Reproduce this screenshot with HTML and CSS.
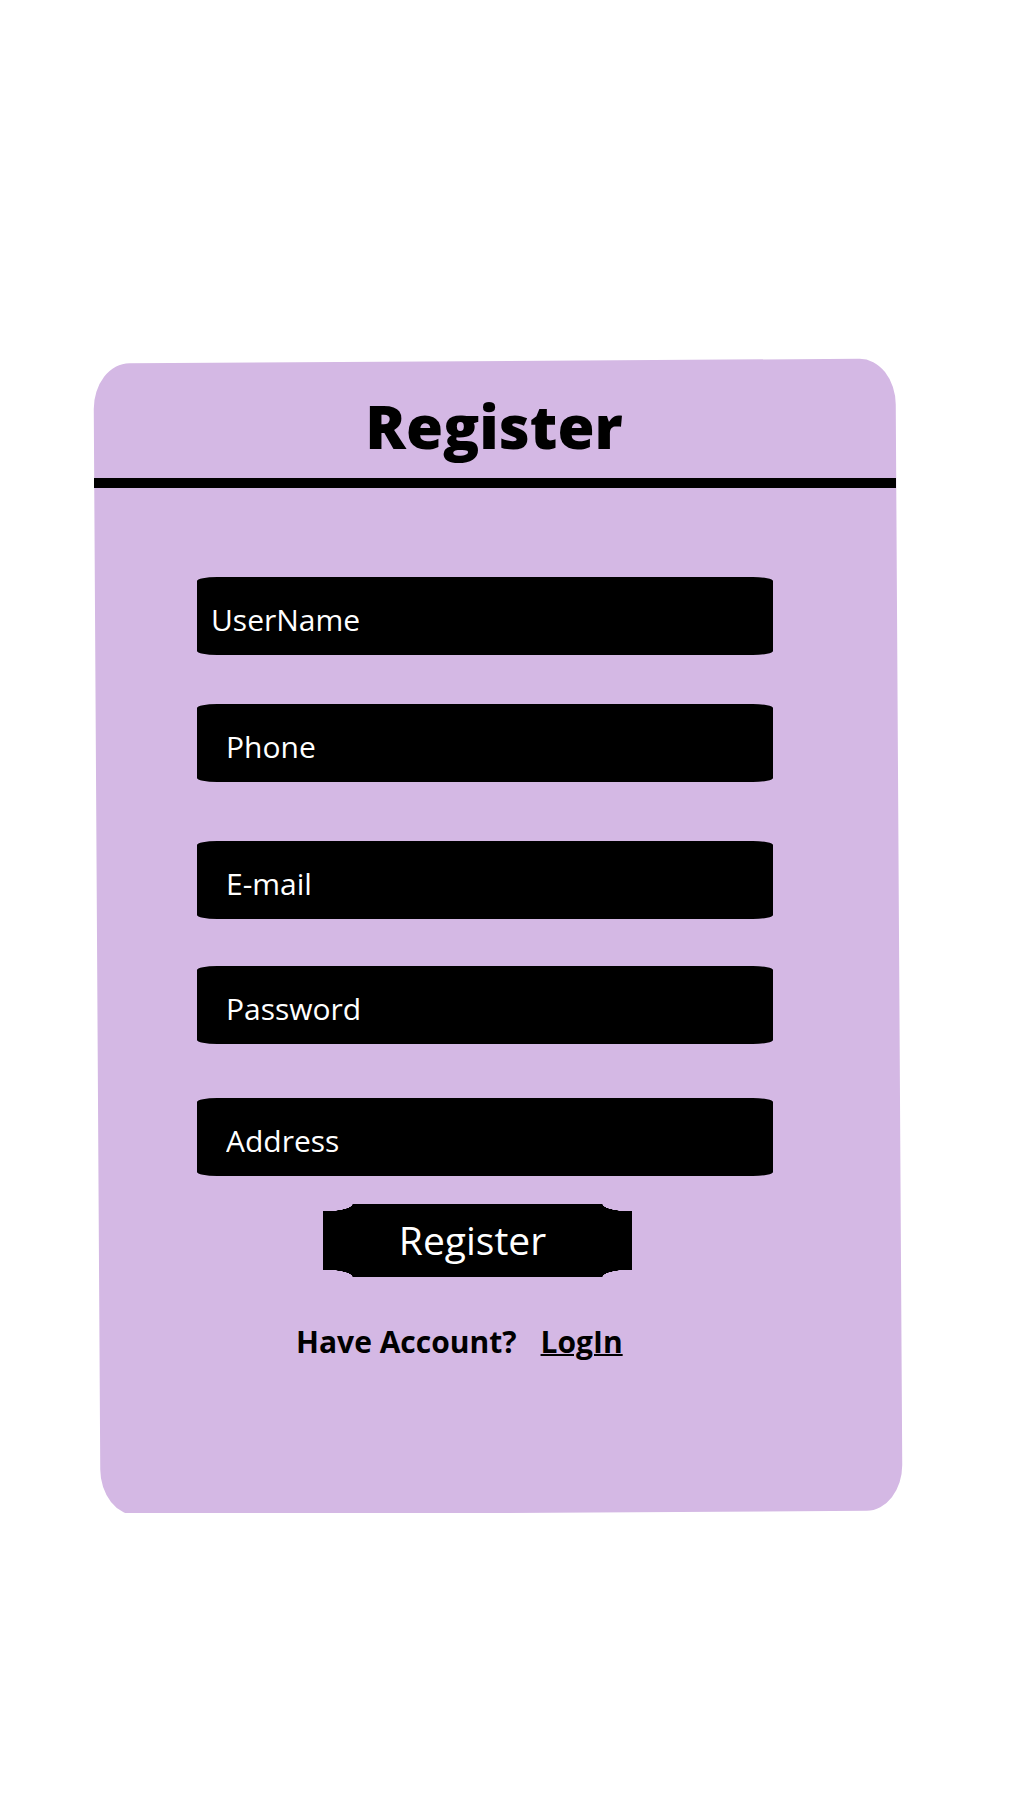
FILE: index.html
```html
<!DOCTYPE html>
<html lang="en">
<head>
<meta charset="utf-8">
<title>Register</title>
<link rel="stylesheet" href="styles.css">
</head>
<body>
<div class="card">
  <form class="card-inner">
    <h1 class="title">Register</h1>
    <div class="rule"></div>
    <div class="fields">
      <input class="field field-first" type="text" placeholder="UserName">
      <input class="field field-2" type="text" placeholder="Phone">
      <input class="field field-3" type="text" placeholder="E-mail">
      <input class="field field-4" type="password" placeholder="Password">
      <input class="field field-5" type="text" placeholder="Address">
    </div>
    <button class="btn" type="button">Register</button>
    <p class="have">Have Account?<a class="login" href="#">LogIn</a></p>
  </form>
</div>
</body>
</html>
```
FILE: styles.css
```css
html, body {
  margin: 0;
  padding: 0;
  background: #ffffff;
}
body {
  font-family: "Open Sans", "Noto Sans", sans-serif;
  padding-top: 361px;
  padding-left: 97px;
}
.card {
  width: 802px;
  height: 1152px;
  background: #d4b8e4;
  border-radius: 36px / 46px;
  transform: rotate(-0.35deg);
}
.card-inner {
  height: 100%;
  transform: rotate(0.35deg);
  display: flex;
  flex-direction: column;
  padding-top: 25px;
  box-sizing: border-box;
}
.title {
  margin: 0;
  height: 80px;
  line-height: 80px;
  font-size: 60px;
  font-weight: 800;
  text-align: center;
  padding-right: 8px;
  color: #000;
}
.rule {
  margin: 12px 3px 0 -3px;
  height: 10px;
  background: #000;
}
.fields {
  display: flex;
  flex-direction: column;
  padding-left: 100px;
  margin-top: 89px;
}
.field {
  display: block;
  width: 576px;
  height: 78px;
  box-sizing: border-box;
  border: none;
  outline: none;
  margin: 0;
  background: #000;
  color: #fff;
  border-radius: 20px / 4px;
  font-family: "Open Sans", "Noto Sans", sans-serif;
  font-size: 30px;
  padding: 6px 0 0 29px;
}
.field::placeholder {
  color: #fff;
  opacity: 1;
}
.field-first { padding-left: 14px; }
.field-2 { margin-top: 49px; }
.field-3 { margin-top: 59px; }
.field-4 { margin-top: 47px; }
.field-5 { margin-top: 54px; }
.btn {
  align-self: flex-start;
  margin: 28px 0 0 226px;
  width: 309px;
  height: 73px;
  border: none;
  padding: 0 10px 2px 0;
  color: #fff;
  font-family: "Open Sans", "Noto Sans", sans-serif;
  font-size: 39px;
  background-color: #000;
  background-image:
    radial-gradient(ellipse 30px 7.5px at 0 0, #d4b8e4 97%, transparent 100%),
    radial-gradient(ellipse 30px 7.5px at 100% 0, #d4b8e4 97%, transparent 100%),
    radial-gradient(ellipse 30px 7.5px at 0 100%, #d4b8e4 97%, transparent 100%),
    radial-gradient(ellipse 30px 7.5px at 100% 100%, #d4b8e4 97%, transparent 100%);
  background-size: 31px 9px;
  background-repeat: no-repeat;
  background-position: left top, right top, left bottom, right bottom;
}
.have {
  margin: 44px 0 0 199px;
  font-size: 30px;
  font-weight: 700;
  color: #000;
}
.login {
  margin-left: 24px;
  color: #000;
  text-decoration: underline;
  text-decoration-thickness: 2px;
}
```
